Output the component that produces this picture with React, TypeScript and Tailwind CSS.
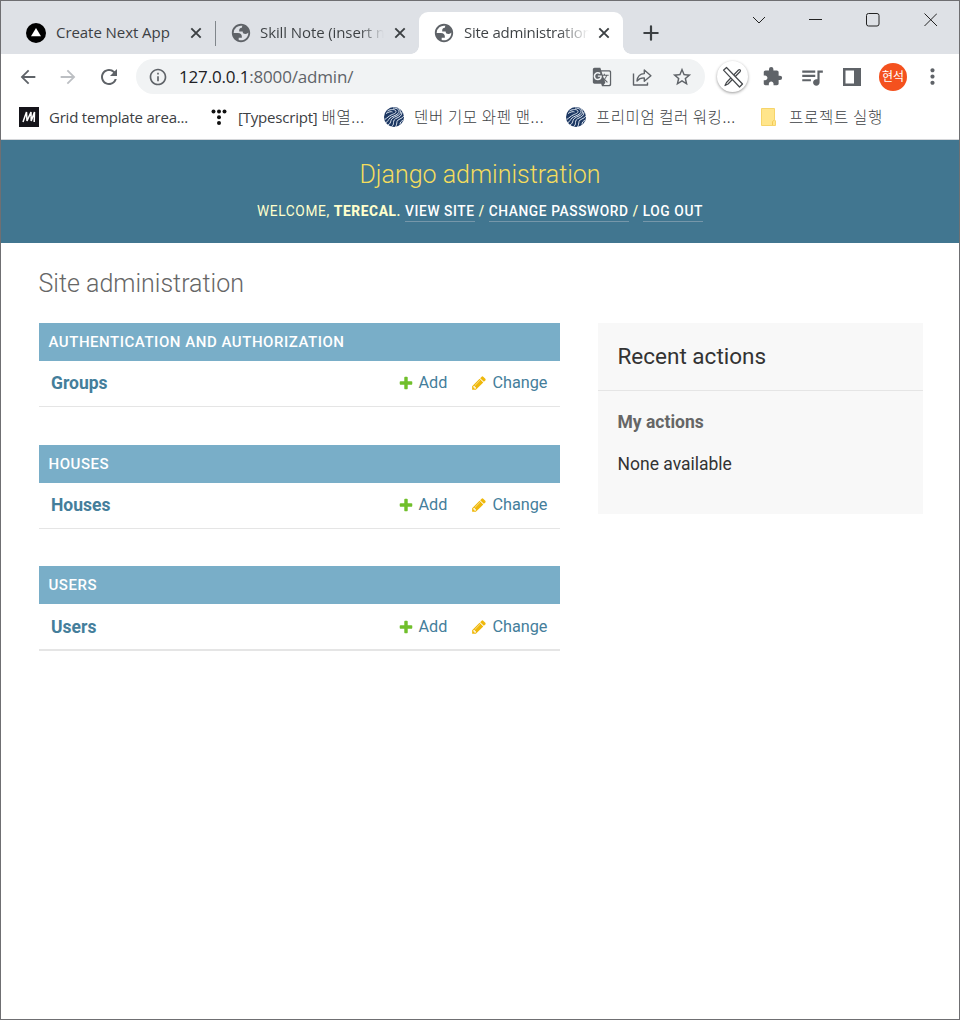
import React from "react";
import {
  MdArrowBack,
  MdArrowForward,
  MdRefresh,
  MdInfoOutline,
  MdGTranslate,
  MdStarBorder,
  MdExtension,
  MdQueueMusic,
  MdMoreVert,
} from "react-icons/md";

const chromeFont = "font-['Open_Sans','Noto_Sans_CJK_KR',sans-serif]";

function Globe() {
  return (
    <svg className="h-[22px] w-[22px] shrink-0" viewBox="0 0 24 24" fill="#5f6368">
      <path fillRule="evenodd" d="M12 2C6.48 2 2 6.48 2 12s4.48 10 10 10 10-4.48 10-10S17.52 2 12 2zM4 12h4.4c3.407.022 4.922 1.73 4.543 5.127H9.488v2.47a8.004 8.004 0 0 0 10.498-8.083C19.327 12.504 18.332 13 17 13c-2.137 0-3.206-.916-3.206-2.75h-3.748c-.274-2.728.683-4.092 2.87-4.092 0-.975.327-1.597.811-1.97A8.004 8.004 0 0 0 4 12z" />
    </svg>
  );
}

function TabClose() {
  return (
    <svg className="h-[12px] w-[12px] shrink-0" viewBox="0 0 12 12" stroke="#3c4043" strokeWidth="1.9" fill="none">
      <path d="M1.3 1.3l9.4 9.4M10.7 1.3l-9.4 9.4" />
    </svg>
  );
}

function TabStrip() {
  return (
    <div className="flex h-[53px] bg-[#dee1e6]">
      <div className="flex h-full w-[418px] items-end">
        <div className="flex h-[42px] w-[214px] items-center pl-[25px]">
          <svg className="h-5 w-5 shrink-0" viewBox="0 0 20 20">
            <circle cx="10" cy="10" r="10" fill="#000" />
            <path d="M10 5l5 8.3H5z" fill="#fff" />
          </svg>
          <span className="ml-[10px] w-[134px] whitespace-nowrap pb-[2px] text-[15px] tracking-[-0.060px] text-[#3c4043]">Create Next App</span>
          <TabClose />
        </div>
        <div className="mb-2 h-[25px] w-px bg-[#80868b]" />
        <div className="flex h-[42px] flex-1 items-center pl-[14px]">
          <Globe />
          <span className="ml-[8px] w-[134px] whitespace-nowrap pb-[2px] text-[15px] tracking-[-0.100px]">
            <span className="block w-[124px] bg-gradient-to-r from-[#3c4043] from-80% to-transparent bg-clip-text text-transparent">Skill Note (insert n</span>
          </span>
          <TabClose />
        </div>
      </div>
      <div className="flex h-full items-end bg-[#dee1e6]">
        <div className="-ml-[8px] h-2 w-2 bg-[radial-gradient(circle_at_0_0,transparent_7.5px,#fff_8px)]" />
        <div className="flex h-[42px] w-[204px] items-center rounded-t-[9px] bg-white pl-[14px]">
          <Globe />
          <span className="ml-[9px] w-[134px] whitespace-nowrap pb-[2px] text-[15px] tracking-[-0.250px]">
            <span className="block w-[125px] bg-gradient-to-r from-[#3c4043] from-75% to-transparent bg-clip-text text-transparent">Site administration</span>
          </span>
          <TabClose />
        </div>
        <div className="h-2 w-2 bg-[radial-gradient(circle_at_100%_0,transparent_7.5px,#fff_8px)]" />
      </div>
      <svg className="ml-[12px] mt-[24px] h-4 w-4" viewBox="0 0 16 16" stroke="#3c4043" strokeWidth="2.2" strokeLinecap="round">
        <path d="M8 1.3v13.4M1.3 8h13.4" />
      </svg>
      <svg className="ml-auto mr-[22px] mt-[11px] h-[15px] w-[186px]" viewBox="0 0 186 15" stroke="#222" strokeWidth="1" fill="none">
        <path d="M2 5l6 6 6-6M58 7.5h13M173.500 1.5L186 14M186 1.5L173.500 14" />
        <rect x="115.500" y="1.500" width="12.500" height="12.500" rx="2" />
      </svg>
    </div>
  );
}

function ShareIcon() {
  return (
    <svg className="h-[20px] w-[20px]" viewBox="0 0 20 20" fill="none" stroke="#5f6368" strokeWidth="1.400" strokeLinejoin="round">
      <path d="M1.500 6.500v11.500h14V15.500" />
      <path d="M5 14c.4-4.300 2.700-7.200 7.300-7.400V3l6.600 5.700-6.600 5.600v-3.400c-3.500-.1-5.500.9-7.300 3.100z" />
    </svg>
  );
}

function Toolbar() {
  return (
    <div className="flex h-[45px] items-center bg-white pl-[16px] text-[#5f6368]">
      <MdArrowBack className="h-[22px] w-[22px]" />
      <MdArrowForward className="ml-[18px] h-[22px] w-[22px] text-[#bcbfc3]" />
      <MdRefresh className="ml-[18px] h-[24px] w-[24px]" />
      <div className="ml-[15px] flex h-[35px] w-[569px] items-center rounded-full bg-[#f1f3f4] pl-[12px]">
        <MdInfoOutline className="h-5 w-5" />
        <span className="ml-[11px] whitespace-nowrap text-[17px] tracking-[-0.170px]">
          <span className="text-[#202124]">127.0.0.1</span>:8000/admin/
        </span>
        <MdGTranslate className="ml-auto h-[20px] w-[20px]" />
        <div className="ml-[20px]"><ShareIcon /></div>
        <MdStarBorder className="ml-[19px] mr-[12px] h-[22px] w-[22px]" />
      </div>
      <div className="ml-[12px] flex h-[31px] w-[31px] items-center justify-center rounded-full bg-white shadow-[0_1px_3px_rgba(0,0,0,0.4)]">
        <svg className="h-[22px] w-[22px]" viewBox="0 0 22 22" fill="#fff" stroke="#44474b" strokeWidth="1.200" strokeLinejoin="round">
          <path d="M3 19.500l1.500-3L16.500 4c1.300-1 2.500.3 1.700 1.500L6 18z" />
          <path d="M1.500 4.200L4.500 1.500 20.500 18l-3 3z" />
        </svg>
      </div>
      <MdExtension className="ml-[14px] h-[21px] w-[21px]" />
      <MdQueueMusic className="ml-[16px] h-[26px] w-[26px]" />
      <svg className="ml-[18px] h-[18px] w-[18px]" viewBox="0 0 18 18">
        <path fillRule="evenodd" d="M0 0h18v18H0zM2.500 2.500v13H11v-13z" fill="#5f6368" />
      </svg>
      <div className="ml-[18px] flex h-[28px] w-[28px] items-center justify-center rounded-full bg-[#f4511e] text-[12px] text-white">현석</div>
      <MdMoreVert className="ml-[13px] h-[25px] w-[25px]" />
    </div>
  );
}

function NavyMark() {
  return (
    <svg className="h-5 w-5 shrink-0" viewBox="0 0 20 20" fill="none">
      <circle cx="10" cy="10" r="10" fill="#1c3762" />
      <g stroke="#dfe7f1" strokeWidth="1">
        <path d="M3.500 4c3-2 8-2 8.500.3.400 2-3 2.700-5 3.700S3 11 .8 12.500" />
        <path d="M2 6.500c2.500-1.700 5.500-2.200 6.500-1.500" />
        <path d="M9 1c5-.2 7.500 3 5 5.500S8 9 6 11s-2 3.500-4 4.500" />
        <path d="M14.500 1.500c3.500 3 2 6-1.500 7.500s-5.500 2.500-6 4.500-1 3.500-3 4.500" />
        <path d="M18 5c0 3.500-2.500 5-5 6s-3.500 2.500-3.500 4.500-.5 3-2 4" />
        <path d="M19.800 9c-1.500 3-6.300 3-6.800 5.500-.3 1.800-.2 3.500-1.500 5.300M19 13.500c-1.800.5-3 1.800-3 4" />
      </g>
    </svg>
  );
}

function Bookmark({ icon, label, className }: { icon: React.ReactNode; label: React.ReactNode; className: string }) {
  return (
    <div className={"flex shrink-0 items-center whitespace-nowrap " + className}>
      {icon}
      <span className="ml-[10px]">{label}</span>
    </div>
  );
}

function BookmarksBar() {
  const korean = "font-['Noto_Sans_CJK_KR',sans-serif] font-light text-[15.500px] leading-[20px]";
  return (
    <div className="flex h-[41px] items-center border-b border-[#d4d6d9] bg-white pb-[5px] pl-[18px] text-[15px] leading-[20px] text-[#3c4043]">
      <Bookmark
        className="w-[191px]"
        label={<span className="tracking-[-0.220px]">Grid template area...</span>}
        icon={
          <svg className="h-5 w-5 shrink-0" viewBox="0 0 20 20">
            <rect width="20" height="20" fill="#15141a" />
            <path d="M4 15l3.500-10L8 14l4-9 .2 9L15.500 5l-.3 10" fill="none" stroke="#fff" strokeWidth="1.500" />
          </svg>
        }
      />
      <Bookmark
        className="w-[174px]"
        label={<><span className="tracking-[-0.200px]">[Typescript]</span><span className={korean + " tracking-[0.600px]"}> 배열...</span></>}
        icon={
          <svg className="h-[18px] w-[18px] shrink-0" viewBox="0 0 18 18" fill="#111">
            <circle cx="3.500" cy="3.500" r="2" /><circle cx="9" cy="3.500" r="2" /><circle cx="14.500" cy="3.500" r="2" />
            <circle cx="9" cy="9.200" r="2" /><circle cx="9" cy="15" r="2" />
          </svg>
        }
      />
      <Bookmark className="w-[182px]" label={<span className={korean + " tracking-[0.650px]"}>덴버 기모 와펜 맨...</span>} icon={<NavyMark />} />
      <Bookmark className="w-[194px]" label={<span className={korean + " tracking-[0.550px]"}>프리미엄 컬러 워킹...</span>} icon={<NavyMark />} />
      <Bookmark
        className=""
        label={<span className={korean + " ml-[2px] tracking-[0.700px]"}>프로젝트 실행</span>}
        icon={
          <svg className="h-[18px] w-[17px] shrink-0" viewBox="0 0 17 18">
            <path d="M1.500.5h13v11.300l1 1.200v4.500h-14z" fill="#ffe58b" stroke="#f6d46a" />
            <path d="M12.500 17v-3.500l2-1.500" fill="none" stroke="#f3cb57" />
          </svg>
        }
      />
    </div>
  );
}

function DjangoHeader() {
  const link = "border-b border-[#7697aa] pb-[2px] font-medium text-white";
  return (
    <div className="flex h-[103px] flex-col items-center bg-[#417690] pt-[19px]">
      <h1 className="whitespace-nowrap text-[25px] font-light leading-[32px] text-[#f5dd5d]">Django administration</h1>
      <div className="mt-[11px] whitespace-nowrap text-[13.750px] font-medium leading-[18px] tracking-[0.600px] text-[#ffc]">
        <span className="font-normal">WELCOME, </span><strong className="font-extrabold">TERECAL</strong>. <span className={link}>VIEW SITE</span> / <span className={link}>CHANGE PASSWORD</span> / <span className={link}>LOG OUT</span>
      </div>
    </div>
  );
}

function AppModule({ caption, model, className, rowClass }: { caption: string; model: string; className: string; rowClass: string }) {
  return (
    <section className={className}>
      <h2 className="flex h-[38px] items-center bg-[#79aec8] pl-[9.500px] text-[15px] font-medium tracking-[0.540px] text-white">{caption}</h2>
      <div className={"flex items-center pl-[12px] pr-[12.500px] text-[16.250px] text-[#447e9b] " + rowClass}>
        <span className="text-[17.500px] font-bold">{model}</span>
        <svg className="ml-auto h-4 w-4" viewBox="0 0 1792 1792">
          <path fill="#70bf2b" d="M1600 796v192q0 40-28 68t-68 28h-416v416q0 40-28 68t-68 28h-192q-40 0-68-28t-28-68v-416h-416q-40 0-68-28t-28-68v-192q0-40 28-68t68-28h416v-416q0-40 28-68t68-28h192q40 0 68 28t28 68v416h416q40 0 68 28t28 68z" />
        </svg>
        <span className="ml-[4px]">Add</span>
        <svg className="ml-[24px] h-4 w-4" viewBox="0 0 1792 1792">
          <path fill="#efb80b" d="M491 1536l91-91-235-235-91 91v107h128v128h107zm523-928q0-22-22-22-10 0-17 7l-542 542q-7 7-7 17 0 22 22 22 10 0 17-7l542-542q7-7 7-17zm-54-192l416 416-832 832h-416v-416zm683 96q0 53-37 90l-166 166-416-416 166-165q36-38 90-38 53 0 91 38l235 234q37 39 37 91z" />
        </svg>
        <span className="ml-[5px]">Change</span>
      </div>
    </section>
  );
}

export default function App() {
  return (
    <div className="flex h-[1020px] w-[960px] flex-col overflow-hidden border border-[#6f6f72] bg-white">
      <div className={chromeFont}>
        <TabStrip />
        <Toolbar />
        <BookmarksBar />
      </div>
      <div className="font-[Roboto,sans-serif]">
        <DjangoHeader />
        <main className="pl-[38px] pt-[25px]">
          <h1 className="-ml-[0.500px] text-[25px] font-light leading-[32px] text-[#666]">Site administration</h1>
          <div className="mt-[23px] flex items-start gap-[38px]">
            <div className="w-[521px] shrink-0">
              <AppModule caption="AUTHENTICATION AND AUTHORIZATION" model="Groups" className="h-[84px] border-b border-[#e5e5e5]" rowClass="h-[44px]" />
              <AppModule caption="HOUSES" model="Houses" className="mt-[38px] h-[84px] border-b border-[#e5e5e5]" rowClass="h-[44px]" />
              <AppModule caption="USERS" model="Users" className="mt-[37px] h-[85px] border-b-2 border-[#e5e5e5]" rowClass="h-[46px]" />
            </div>
            <aside className="h-[191px] w-[325px] shrink-0 bg-[#f8f8f8] text-[#333]">
              <h2 className="flex h-[68px] items-center border-b border-[#e5e5e5] pl-[19.500px] text-[22.500px] font-normal">Recent actions</h2>
              <h3 className="mt-[19px] pl-[19.500px] text-[17.500px] font-bold leading-[24px] text-[#666]">My actions</h3>
              <p className="mt-[18px] pl-[19.500px] text-[17.500px] leading-[24px]">None available</p>
            </aside>
          </div>
        </main>
      </div>
    </div>
  );
}
